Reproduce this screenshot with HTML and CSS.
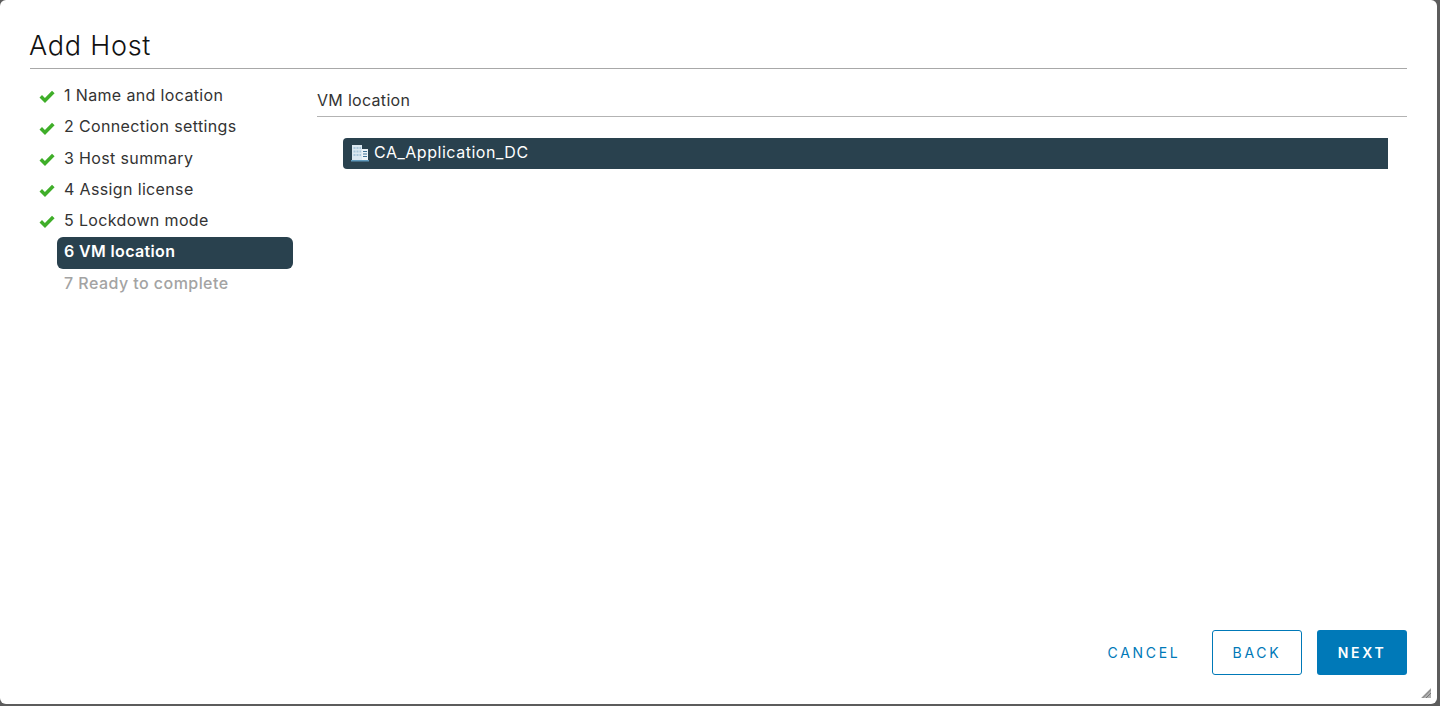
FILE: index.html
```html
<!DOCTYPE html>
<html lang="en">
<head>
<meta charset="utf-8">
<title>Add Host</title>
<link rel="stylesheet" href="styles.css">
</head>
<body>
<main class="dialog">
  <header class="head"><h1 class="title">Add Host</h1></header>
  <div class="body">
    <nav class="steps">
      <div class="step done"><svg class="check" viewBox="0 0 16 14"><path d="M0.500 7.500 3 5l2.900 2.900L13 .8l2.600 2.500L6 13z"/></svg><span>1 Name and location</span></div>
      <div class="step done"><svg class="check" viewBox="0 0 16 14"><path d="M0.500 7.500 3 5l2.900 2.900L13 .8l2.600 2.500L6 13z"/></svg><span>2 Connection settings</span></div>
      <div class="step done"><svg class="check" viewBox="0 0 16 14"><path d="M0.500 7.500 3 5l2.900 2.900L13 .8l2.600 2.500L6 13z"/></svg><span>3 Host summary</span></div>
      <div class="step done"><svg class="check" viewBox="0 0 16 14"><path d="M0.500 7.500 3 5l2.900 2.900L13 .8l2.600 2.500L6 13z"/></svg><span>4 Assign license</span></div>
      <div class="step done"><svg class="check" viewBox="0 0 16 14"><path d="M0.500 7.500 3 5l2.900 2.900L13 .8l2.600 2.500L6 13z"/></svg><span>5 Lockdown mode</span></div>
      <div class="step active"><span>6 VM location</span></div>
      <div class="step pending"><span>7 Ready to complete</span></div>
    </nav>
    <section class="content">
      <h2 class="section-title">VM location</h2>
      <div class="tree-row">
        <svg class="dc-icon" viewBox="0 0 18 17">
          <rect x="1" y="0" width="10" height="15" fill="#dbe8f1"/>
          <path d="M2.500 2h2v2h-2zM5.500 2h2v2h-2zM8.500 2h1.500v2H8.500zM2.500 5.500h2v2h-2zM5.500 5.500h2v2h-2zM8.500 5.500h1.500v2H8.500zM2.500 9h2v2h-2zM5.500 9h2v2h-2zM8.500 9h1.500v2H8.500z" fill="#a9c6da"/>
          <rect x="11" y="4" width="6" height="11" fill="#eef4f8"/>
          <path d="M12 6h4v1h-4zM12 8.500h4v1h-4zM12 11h4v1h-4z" fill="#3f7396"/>
          <rect x="0" y="15" width="18" height="1.500" fill="#5f9abd"/>
        </svg>
        <span>CA_Application_DC</span>
      </div>
    </section>
  </div>
  <footer class="foot">
    <button class="btn link" type="button">CANCEL</button>
    <button class="btn outline" type="button">BACK</button>
    <button class="btn solid" type="button">NEXT</button>
  </footer>
  <svg class="grip" viewBox="0 0 10 10"><path d="M10 0v10H0z" fill="#b0b0b0"/><path d="M10 1.500 1.500 10M10 5 5 10" stroke="#777" stroke-width="1" fill="none"/></svg>
</main>
</body>
</html>
```
FILE: styles.css
```css
* { box-sizing: border-box; }
html, body { margin: 0; height: 100%; }
body {
  background: #5c5c5c;
  overflow: hidden;
  font-family: Inter, "Liberation Sans", sans-serif;
  color: #333;
}
.dialog {
  position: relative;
  width: 1437px;
  height: 704px;
  background: #fff;
  border-radius: 6px;
  padding: 0 30px;
  display: flex;
  flex-direction: column;
}
.head {
  height: 69px;
  border-bottom: 1px solid #a8a8a8;
  flex: none;
  padding-top: 29px;
}
.title {
  margin: 0 0 0 -1px;
  font-size: 27px;
  line-height: 34px;
  font-weight: 300;
  color: #111;
  letter-spacing: 0.75px;
}
.body {
  flex: 1;
  display: flex;
  min-height: 0;
}
.steps {
  width: 287px;
  flex: none;
  padding-top: 10.6px;
  display: flex;
  flex-direction: column;
}
.step {
  height: 31.2px;
  position: relative;
  margin-left: 27px;
  width: 236px;
  padding-left: 7px;
  display: flex;
  align-items: center;
  font-size: 16px;
  letter-spacing: 0.36px;
  font-weight: 400;
  white-space: nowrap;
}
.check {
  position: absolute;
  left: -18px;
  top: 10.9px;
  width: 16px;
  height: 14px;
  fill: #3fae29;
}
.active {
  height: 32px;
  margin-top: 1.4px;
  margin-bottom: -1.2px;
  padding-bottom: 3px;
  background: #29414e;
  color: #fff;
  font-weight: 600;
  border-radius: 6px;
}
.pending { color: #a3a3a3; font-weight: 500; letter-spacing: 0.45px; }
.content {
  flex: 1;
  min-width: 0;
}
.section-title {
  margin: 0;
  height: 48px;
  padding-top: 20px;
  font-size: 16px;
  letter-spacing: 0.3px;
  line-height: 22px;
  font-weight: 400;
  border-bottom: 1px solid #b3b3b3;
}
.tree-row {
  margin: 21px 19px 0 26px;
  height: 31px;
  background: #29414e;
  color: #fff;
  border-radius: 4px 0 0 4px;
  display: flex;
  align-items: center;
  padding: 0 0 4px 8px;
  gap: 5px;
  font-size: 16px;
  letter-spacing: 0.53px;
}
.dc-icon { width: 18px; height: 17px; flex: none; margin-top: 4px; }
.foot {
  flex: none;
  height: 74px;
  display: flex;
  justify-content: flex-end;
  align-items: flex-start;
}
.btn {
  height: 45px;
  font-family: inherit;
  font-size: 14px;
  letter-spacing: 2.7px;
  border-radius: 3px;
  padding: 0;
  background: none;
  border: 1px solid transparent;
  color: #0079b8;
  font-weight: 400;
}
.link { width: 102px; margin-right: 17px; }
.outline { width: 90px; border-color: #0079b8; margin-right: 15px; }
.solid { width: 90px; background: #0079b8; color: #fff; font-weight: 600; }
.grip {
  position: absolute;
  right: 6px;
  bottom: 6px;
  width: 10px;
  height: 10px;
}
```
